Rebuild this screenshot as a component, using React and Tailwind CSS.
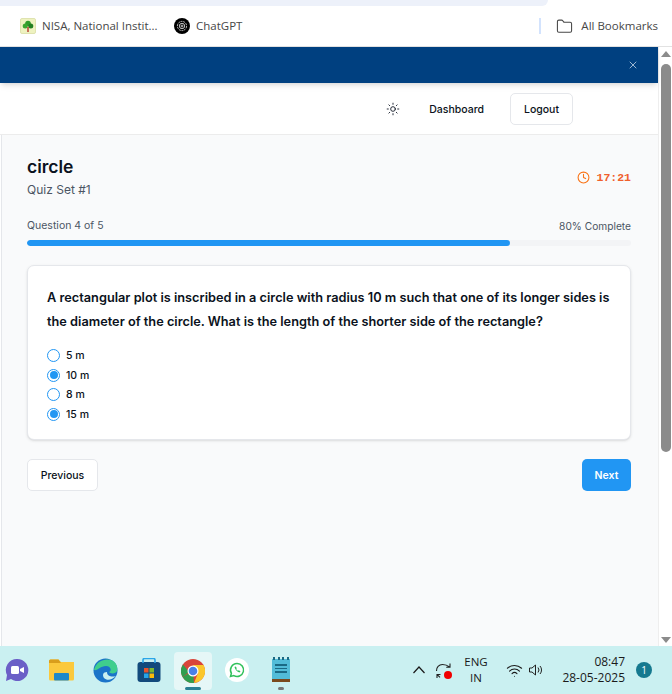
import { Clock, Sun, X, Wifi, Folder } from "lucide-react";

function BookmarkBar() {
  return (
    <div className="h-[47px] shrink-0 bg-white border-b border-[#e2e2e2] flex flex-col font-['Open_Sans',sans-serif]">
      <div className="h-[6px] w-[548px] bg-[#edf1fa] rounded-br-[10px]" />
      <div className="flex items-center flex-1 pl-[20px] text-[11.5px] text-[#474747]">
        <div className="w-[16px] h-[16px] rounded-[2px] bg-[#eef2c0] border border-[#dfe3b0] flex items-center justify-center">
          <svg width="12" height="13" viewBox="0 0 12 13">
            <circle cx="6" cy="3.5" r="2.800" fill="#2f9a2a" />
            <circle cx="3.200" cy="6" r="2.500" fill="#3aa52f" />
            <circle cx="8.800" cy="6" r="2.500" fill="#237f22" />
            <rect x="5.300" y="7" width="1.400" height="5" fill="#b5362a" />
          </svg>
        </div>
        <span className="ml-[6px] w-[116px] whitespace-nowrap">NISA, National Instit...</span>
        <div className="ml-[16px] w-[16px] h-[16px] rounded-full bg-black flex items-center justify-center">
          <svg width="12" height="12" viewBox="0 0 12 12" fill="none" stroke="#d4d4d4" strokeWidth="0.9">
            <circle cx="6" cy="6" r="4.600" strokeDasharray="2 0.800" />
            <circle cx="6" cy="6" r="2.700" />
            <circle cx="6" cy="6" r="1" />
          </svg>
        </div>
        <span className="ml-[6px]">ChatGPT</span>
        <div className="ml-auto flex items-center">
          <div className="w-[2px] h-[16px] bg-[#d3e3fd]" />
          <Folder className="ml-[15px] w-[17px] h-[17px] text-[#474747]" strokeWidth={1.5} />
          <span className="ml-[8px] mr-[14px]">All Bookmarks</span>
        </div>
      </div>
    </div>
  );
}

function Scrollbar() {
  return (
    <div className="w-[14px] shrink-0 bg-white flex flex-col items-center pt-[4px] pb-[3px] border-l border-[#eeeeee]">
      <div className="w-0 h-0 border-x-[5px] border-x-transparent border-b-[6px] border-b-[#8b8b8b]" />
      <div className="w-[10px] h-[388px] mt-[7px] rounded-full bg-[#8b8b8b]" />
      <div className="mt-auto w-0 h-0 border-x-[5px] border-x-transparent border-t-[6px] border-t-[#8b8b8b]" />
    </div>
  );
}

function Option({ label, checked }) {
  return (
    <label className="flex items-center h-[19.5px] gap-[6px] text-[10.5px] font-medium text-[#0b1220]">
      <span className="w-[13px] h-[13px] rounded-full border border-[#2196f3] flex items-center justify-center bg-white">
        {checked && <span className="w-[8px] h-[8px] rounded-full bg-[#2196f3]" />}
      </span>
      <span className="pt-[1px]">{label}</span>
    </label>
  );
}

function Quiz() {
  return (
    <main className="flex-1 bg-[#f9fafb] border-l border-[#e5e7eb] ml-px pl-[25px] pr-[27px] pt-[20px]">
      <div className="flex justify-between items-center">
        <div>
          <h1 className="text-[17.5px] leading-[24px] font-semibold text-[#0b1220]">circle</h1>
          <p className="text-[12px] leading-[20px] mt-[1px] text-[#4b5563]">Quiz Set #1</p>
        </div>
        <div className="flex items-center gap-[6px] text-[#f0602c] text-[11.5px] font-bold font-['Liberation_Mono',monospace]">
          <Clock className="w-[13px] h-[13px] text-[#f97316]" strokeWidth={2} />
          <span>17:21</span>
        </div>
      </div>
      <div className="flex justify-between mt-[19px] text-[10.5px] leading-[14px] text-[#4b5563]">
        <span>Question 4 of 5</span>
        <span className="text-[10.2px]">80% Complete</span>
      </div>
      <div className="mt-[7px] h-[6px] rounded-full bg-[#f3f4f6] overflow-hidden">
        <div className="h-full w-[80%] rounded-full bg-[#2196f3]" />
      </div>
      <section className="mt-[19px] h-[175px] bg-white border border-[#e5e7eb] rounded-[7px] shadow-sm pl-[19px] pr-[16px] pt-[20px]">
        <p className="text-[12.75px] leading-[24px] font-semibold text-[#0b1220]">
          A rectangular plot is inscribed in a circle with radius 10 m such that one of its longer sides is the diameter of the circle. What is the length of the shorter side of the rectangle?
        </p>
        <div className="mt-[12px] flex flex-col">
          <Option label="5 m" />
          <Option label="10 m" checked />
          <Option label="8 m" />
          <Option label="15 m" checked />
        </div>
      </section>
      <div className="flex justify-between mt-[19px]">
        <button className="w-[71px] h-[32px] pt-[1px] bg-white border border-[#e5e7eb] rounded-[5px] text-[10.5px] font-medium text-[#0b1220]">Previous</button>
        <button className="w-[49px] h-[32px] pt-[1px] bg-[#2196f3] rounded-[5px] text-[10.5px] font-semibold text-white">Next</button>
      </div>
    </main>
  );
}

function Taskbar() {
  return (
    <div className="h-[48px] shrink-0 bg-[#caf0f1] flex items-center font-['Open_Sans',sans-serif] text-[#1a1a1a]">
      <div className="flex items-center w-[300px] h-full relative">
        <svg className="ml-[5px]" width="24" height="24" viewBox="0 0 24 24">
          <path d="M12 1a11 11 0 1 1-6 20l-5 2 1-6A11 11 0 0 1 12 1z" fill="#6b5fc7" />
          <rect x="6" y="8" width="8" height="8" rx="1.5" fill="#fff" />
          <path d="M15 11l4-2v6l-4-2z" fill="#fff" />
        </svg>
        <svg className="ml-[20px]" width="25" height="22" viewBox="0 0 25 22">
          <path d="M0 2a1.5 1.5 0 0 1 1.5-1.5h8L12 3h13v17a1.5 1.5 0 0 1-1.5 1.5h-22A1.5 1.5 0 0 1 0 20z" fill="#fbc93d" />
          <path d="M0 2a1.5 1.5 0 0 1 1.5-1.5h8L12 4H0z" fill="#d99e1c" />
          <rect x="5" y="14" width="15" height="7.5" rx="1" fill="#1e88c9" />
        </svg>
        <svg className="ml-[19px]" width="25" height="25" viewBox="0 0 25 25">
          <circle cx="12.5" cy="12.5" r="12" fill="#1b74c9" />
          <path d="M1 12C3 3 12 0 18 2c5 2 7 6 6 11-1 3-7 3-8 1 3-1 2-6-3-6-6 0-8 5-12 4z" fill="#3fce8d" />
          <path d="M14 14c-4 0-5 3-3 6 3 3 8 2 12-2-3 1-9 1-9-4z" fill="#caf0f1" />
        </svg>
        <svg className="ml-[19px]" width="24" height="24" viewBox="0 0 24 24">
          <rect x="0.5" y="4" width="23" height="20" rx="3" fill="#124a7c" />
          <path d="M6 5V2a1.5 1.5 0 0 1 1.5-1.5h9A1.5 1.5 0 0 1 18 2v3" fill="none" stroke="#2aa5e8" strokeWidth="1.6" />
          <rect x="7" y="10" width="4.5" height="4.5" fill="#e8532b" />
          <rect x="12.5" y="10" width="4.5" height="4.5" fill="#7cb82f" />
          <rect x="7" y="15.5" width="4.5" height="4.5" fill="#26a4e8" />
          <rect x="12.5" y="15.5" width="4.5" height="4.5" fill="#fbbc09" />
        </svg>
        <div className="ml-[13px] w-[38px] h-[38px] mt-[1px] rounded-[4px] bg-[#e6f7f7] flex items-center justify-center relative">
          <svg width="24" height="24" viewBox="0 0 24 24">
            <circle cx="12" cy="12" r="12" fill="#d9453a" />
            <path d="M12 12L1.6 18A12 12 0 0 0 12 24h1z" fill="#2f9e4f" />
            <path d="M1.6 18A12 12 0 0 1 2 5.5L8 13z" fill="#2f9e4f" />
            <path d="M12 6h10.5A12 12 0 0 1 13 24l4-10z" fill="#fbc72c" />
            <circle cx="12" cy="12" r="5.5" fill="#fff" />
            <circle cx="12" cy="12" r="4.3" fill="#4a80e8" />
          </svg>
          <div className="absolute bottom-0 left-[11px] w-[16px] h-[3px] rounded-full bg-[#2a7f94]" />
        </div>
        <svg className="ml-[13px]" width="24" height="24" viewBox="0 0 24 24">
          <circle cx="12" cy="12" r="12" fill="#fff" />
          <path d="M12 5.5a6.5 6.5 0 0 0-5.6 9.8L5.5 18.5l3.3-.9A6.5 6.5 0 1 0 12 5.5z" fill="none" stroke="#31c15b" strokeWidth="1.5" />
          <path d="M9.5 9c.8 3 2.5 4.800 5 5.500l1-1.300-1.800-1-.7.600c-.8-.4-1.400-1-1.800-1.800l.6-.7-1-1.800z" fill="#31c15b" />
        </svg>
        <div className="relative ml-[23px] w-[18px] h-[25px] mb-[2px]">
          <div className="absolute inset-x-0 top-[2px] bottom-[3px] bg-[#52bcd8] flex flex-col items-center justify-center gap-[2px]">
            <div className="w-[12px] h-[1.5px] bg-[#1a6a85]" />
            <div className="w-[12px] h-[1.5px] bg-[#1a6a85]" />
            <div className="w-[12px] h-[1.5px] bg-[#1a6a85]" />
          </div>
          <div className="absolute inset-x-0 bottom-0 h-[3px] bg-[#7a4a1e]" />
          <div className="absolute inset-x-[1px] top-0 h-[3px] flex justify-between">
            <div className="w-[2px] h-full bg-[#1a6a85]" />
            <div className="w-[2px] h-full bg-[#1a6a85]" />
            <div className="w-[2px] h-full bg-[#1a6a85]" />
            <div className="w-[2px] h-full bg-[#1a6a85]" />
          </div>
        </div>
        <div className="absolute left-[278px] bottom-[4px] w-[6px] h-[3px] rounded-full bg-[#777777]" />
      </div>
      <svg className="ml-[113px]" width="12" height="8" viewBox="0 0 12 8" fill="none" stroke="#1a1a1a" strokeWidth="1.2">
        <path d="M0.500 7L6 1l5.500 6" />
      </svg>
      <div className="relative ml-[10px] w-[17px] h-[17px]">
        <svg width="17" height="17" viewBox="0 0 17 17" fill="none" stroke="#222" strokeWidth="1.1">
          <path d="M1.500 9a6 6 0 0 1 6-6.500c3 0 5 .8 7 2.500M15 1.500V5.300h-3.800" />
          <path d="M2 16v-3.500h3.500M2.500 12.800l2.500 2.500" />
        </svg>
        <div className="absolute right-0 bottom-0 w-[8px] h-[8px] rounded-full bg-[#f00000]" />
      </div>
      <div className="ml-[10px] w-[28px] text-center text-[11.5px] leading-[16px]">
        <div>ENG</div>
        <div>IN</div>
      </div>
      <Wifi className="ml-[16px] w-[17px] h-[17px]" strokeWidth={1.5} />
      <svg className="ml-[5px]" width="16" height="16" viewBox="0 0 16 16" fill="none" stroke="#222" strokeWidth="1">
        <path d="M1.500 6v4h2.500l3.500 3V3L4 6z" />
        <path d="M10 5.500a4 4 0 0 1 0 5M12 4a6 6 0 0 1 0 8" />
      </svg>
      <div className="ml-auto text-right text-[12px] leading-[16px]">
        <div>08:47</div>
        <div>28-05-2025</div>
      </div>
      <div className="ml-[11px] mr-[20px] w-[16px] h-[16px] rounded-full bg-[#15798f] text-white text-[10px] flex items-center justify-center">1</div>
    </div>
  );
}

export default function App() {
  return (
    <div className="h-[694px] w-[672px] flex flex-col overflow-hidden bg-white font-['Inter',sans-serif]">
      <BookmarkBar />
      <div className="flex flex-1 min-h-0">
        <div className="flex-1 flex flex-col min-w-0">
          <div className="h-[36px] shrink-0 bg-[#004080] shadow-md flex items-center justify-end pr-[19px] relative">
            <X className="w-[12px] h-[12px] text-[#c4d5e6]" strokeWidth={1.6} />
          </div>
          <nav className="h-[52px] shrink-0 bg-white border-b border-[#ececec] flex items-center justify-end pr-[85px] text-[10.5px] font-medium text-[#0b1220]">
            <Sun className="w-[14px] h-[14px]" strokeWidth={1.5} />
            <span className="ml-[29px] pt-[2px]">Dashboard</span>
            <button className="ml-[26px] w-[63px] h-[32px] pt-[2px] border border-[#e5e7eb] rounded-[5px] bg-white font-medium">Logout</button>
          </nav>
          <Quiz />
        </div>
        <Scrollbar />
      </div>
      <Taskbar />
    </div>
  );
}
